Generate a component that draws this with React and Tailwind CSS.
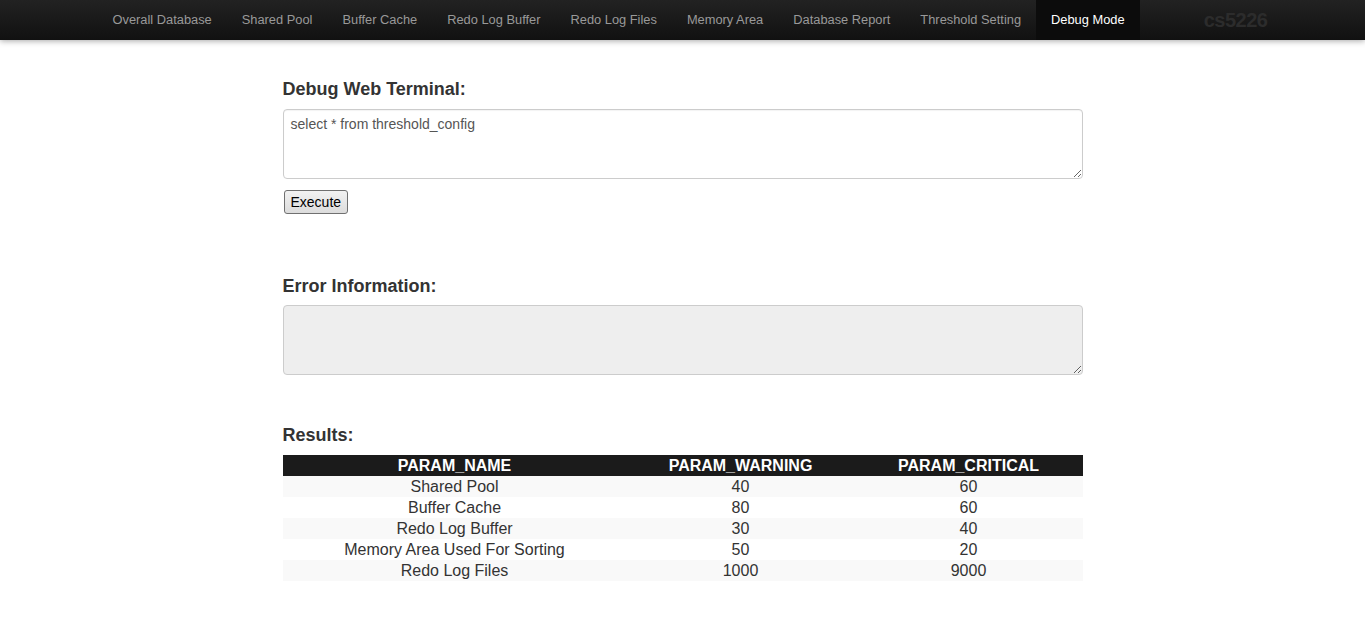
import React from 'react';

const navItems = [
  'Overall Database',
  'Shared Pool',
  'Buffer Cache',
  'Redo Log Buffer',
  'Redo Log Files',
  'Memory Area',
  'Database Report',
  'Threshold Setting',
  'Debug Mode',
];

const rows = [
  ['Shared Pool', '40', '60'],
  ['Buffer Cache', '80', '60'],
  ['Redo Log Buffer', '30', '40'],
  ['Memory Area Used For Sorting', '50', '20'],
  ['Redo Log Files', '1000', '9000'],
];

const App = () => {
  return (
    <div className="min-h-screen bg-white text-[#333] font-['Liberation_Sans',Arial,sans-serif]">
      {/* Navbar */}
      <nav className="h-10 bg-gradient-to-b from-[#222] to-[#111] shadow-[0_1px_6px_rgba(0,0,0,0.35)]">
        <div className="w-[1170px] mx-auto h-10 flex items-center justify-between">
          <ul className="flex h-10">
            {navItems.map((item) => (
              <li key={item}>
                <a
                  href="#"
                  className={
                    item === 'Debug Mode'
                      ? 'block h-10 px-[15px] leading-10 text-[12.85px] text-white bg-[#0c0c0c]'
                      : 'block h-10 px-[15px] leading-10 text-[12.85px] text-[#999] hover:text-white'
                  }
                >
                  {item}
                </a>
              </li>
            ))}
          </ul>
          <span className="text-[20px] font-bold text-[#2c2c2c] leading-10 tracking-tight">cs5226</span>
        </div>
      </nav>

      <div className="w-[800px] mx-auto pt-[39px]">
        {/* Debug terminal */}
        <h3 className="text-[18px] font-bold leading-5">Debug Web Terminal:</h3>
        <textarea
          defaultValue="select * from threshold_config"
          className="mt-[10px] block w-full h-[70px] border border-[#ccc] rounded-[4px] pl-[7px] pr-[6px] pt-[4px] text-[14px] leading-5 text-[#555] outline-none shadow-[inset_0_1px_1px_rgba(0,0,0,0.05)]"
        />
        <button className="mt-[11px] ml-px h-6 px-[6px] text-[14px] text-black border border-[#707070] rounded-[3px] bg-gradient-to-b from-[#f2f2f2] to-[#dcdcdc]">
          Execute
        </button>

        {/* Error info */}
        <h3 className="mt-[62px] text-[18px] font-bold leading-5">Error Information:</h3>
        <textarea
          disabled
          className="mt-[9px] block w-full h-[70px] border border-[#ccc] rounded-[4px] bg-[#eee] px-[6px] py-[6px] text-[14px] outline-none"
        />

        {/* Results */}
        <h3 className="mt-[50px] text-[18px] font-bold leading-5">Results:</h3>
        <table className="mt-[10px] w-full border-collapse text-[16px] text-center">
          <thead>
            <tr className="bg-[#1b1b1b] text-white">
              <th className="w-[344px] h-[21px] leading-[21px] p-0 font-bold">PARAM_NAME</th>
              <th className="w-[228px] h-[21px] leading-[21px] p-0 font-bold">PARAM_WARNING</th>
              <th className="w-[228px] h-[21px] leading-[21px] p-0 font-bold">PARAM_CRITICAL</th>
            </tr>
          </thead>
          <tbody>
            {rows.map((r, i) => (
              <tr key={r[0]} className={i % 2 === 0 ? 'bg-[#f9f9f9]' : 'bg-white'}>
                {r.map((c, j) => (
                  <td key={j} className="h-[21px] leading-[20px] p-0 pt-px">
                    {c}
                  </td>
                ))}
              </tr>
            ))}
          </tbody>
        </table>
      </div>
    </div>
  );
};

export default App;
